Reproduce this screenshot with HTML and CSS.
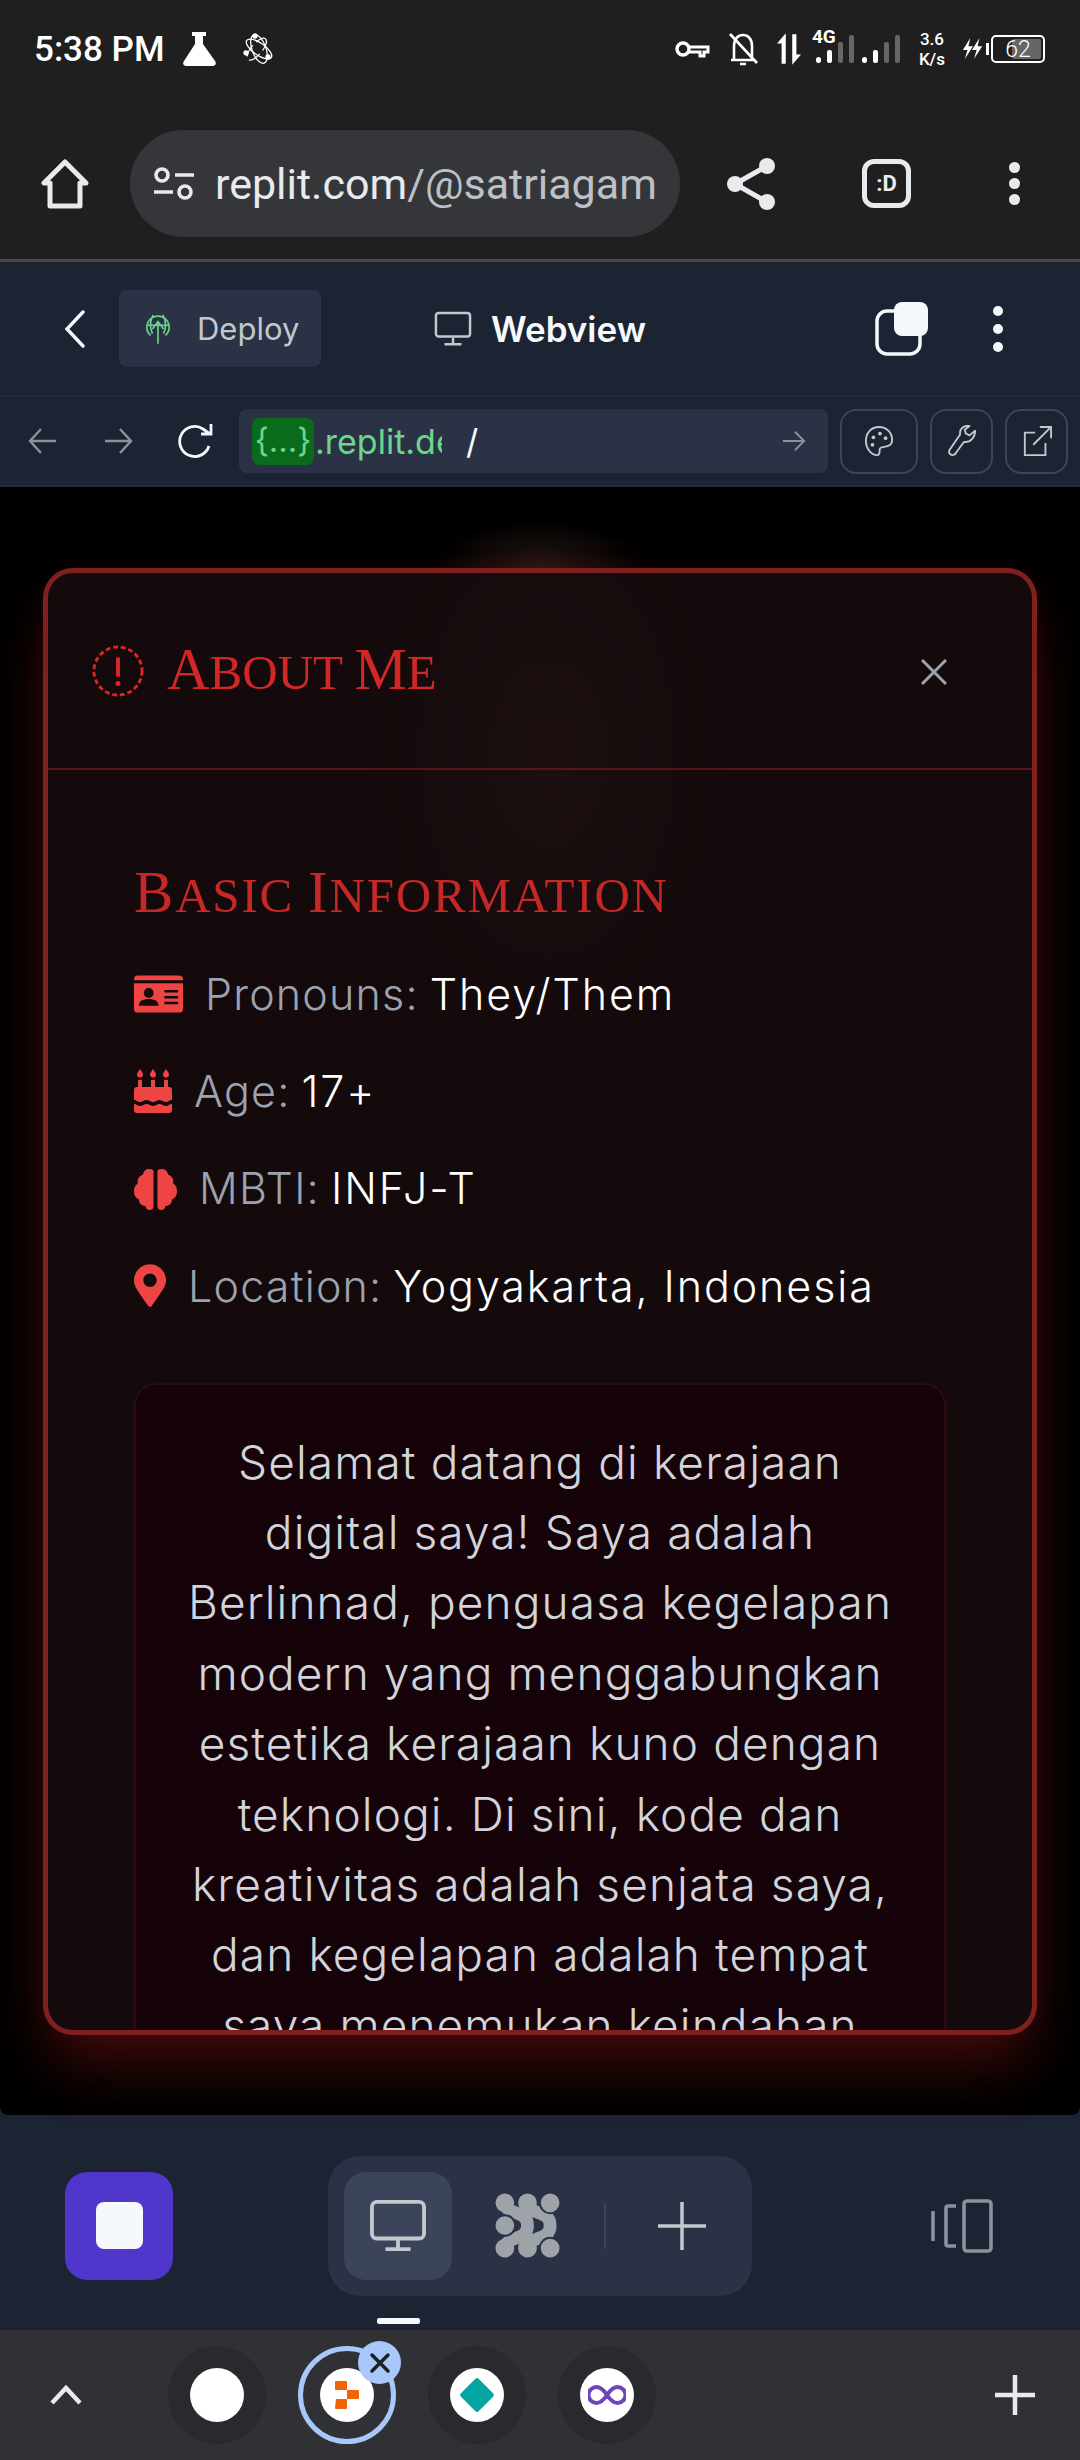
FILE: index.html
```html
<!DOCTYPE html>
<html>
  <head>
    <link rel="stylesheet" href="styles.css">
  </head>
  <body>
    <div class="browser">
      <div class="status">
        <div class="status-left">
          <span class="time">5:38 PM</span>
          <svg class="flask" viewBox="0 0 36 36"><path d="M11 1h14v4h-3v8l12 17c2 3 0 5-3 5H6c-3 0-5-2-3-5l11-17V5h-3z" fill="#fff"/></svg>
          <svg class="atom" viewBox="0 0 32 32" fill="none" stroke="#fff" stroke-width="1.3"><ellipse cx="16" cy="16" rx="7" ry="15" transform="rotate(-20 16 16)"/><ellipse cx="16" cy="16" rx="15" ry="6" transform="rotate(35 16 16)"/><ellipse cx="16" cy="16" rx="15" ry="6" transform="rotate(-50 16 16) scale(.9)" stroke-dasharray="14 5"/><circle cx="12" cy="3" r="2" fill="#fff"/><circle cx="25" cy="24" r="2" fill="#fff"/><circle cx="3" cy="20" r="2" fill="#fff"/></svg>
        </div>
        <div class="status-right">
          <svg class="key" viewBox="0 0 36 20" fill="none" stroke="#fff" stroke-width="3.4"><circle cx="9" cy="10" r="6"/><path d="M15 8h19v5h-4v4h-4v-4h-11" stroke-width="3"/></svg>
          <svg class="bell" viewBox="0 0 32 36" fill="none" stroke="#fff" stroke-width="2.6"><path d="M4 29h24M7 29V15C7 8 11 4 16 4s9 4 9 11v14M13 33h6M3 3l27 29"/></svg>
          <svg class="arrows" viewBox="0 0 26 34" fill="#fff"><path d="M5 0v33h4.500V0L0 11h5zM16.500 34V1H21v22h5l-9.500 11z"/></svg>
          <div class="signal">
            <span class="net">4G</span>
            <svg viewBox="0 0 84 28"><g fill="#fff"><rect x="0" y="22" width="5" height="6" rx="2.5"/><rect x="11" y="15" width="5" height="13" rx="2"/><rect x="46" y="22" width="5" height="6" rx="2.5"/><rect x="57" y="15" width="5" height="13" rx="2"/></g><g fill="#666"><rect x="22" y="7" width="5" height="21" rx="2"/><rect x="33" y="0" width="5" height="28" rx="2"/><rect x="68" y="7" width="5" height="21" rx="2"/><rect x="79" y="0" width="5" height="28" rx="2"/></g></svg>
          </div>
          <div class="speed"><span>3.6</span><span>K/s</span></div>
          <svg class="bolt" viewBox="0 0 24 26" fill="#fff"><path d="M9 1 1 14h5l-3 10 9-14H7zM19 1l-8 13h5l-3 10 9-14h-5z"/></svg>
          <div class="battery-cap"></div>
          <div class="battery"><div class="battery-fill"></div><span>62</span></div>
        </div>
      </div>
      <div class="toolbar">
        <svg class="home" viewBox="0 0 48 50" fill="none" stroke="#e8eaed" stroke-width="5" stroke-linejoin="round"><path d="M24 3 3 24h6v23h30V24h6z"/></svg>
        <div class="omnibox">
          <svg class="tune" viewBox="0 0 42 34" fill="none" stroke="#e8eaed" stroke-width="3.6"><circle cx="9" cy="8" r="6"/><path d="M22 8h19M1 25h19"/><circle cx="32" cy="25" r="6"/></svg>
          <span class="url">replit.com<span class="url-dim">/@satriagam</span></span>
        </div>
        <svg class="share" viewBox="0 0 50 54" fill="#e8eaed"><circle cx="41" cy="9" r="8"/><circle cx="9" cy="27" r="8"/><circle cx="41" cy="45" r="8"/><path d="M41 9 9 27l32 18" fill="none" stroke="#e8eaed" stroke-width="5"/></svg>
        <div class="tab-count">:D</div>
        <div class="dots"><i></i><i></i><i></i></div>
      </div>
    </div>

    <header class="repl-head">
      <svg class="back" viewBox="0 0 22 38" fill="none" stroke="#f5f9fc" stroke-width="3.4" stroke-linecap="round"><path d="M19 2 3 19l16 17"/></svg>
      <div class="deploy">
        <svg viewBox="0 0 28 34" fill="none" stroke="#6bd68a" stroke-width="1.8"><path d="M6 24A12 12 0 1 1 22 24M2 13h24M14 33V9M8 17l6-8 6 8M9 2c-4 6-4 14-1 20M19 2c4 6 4 14 1 20"/></svg>
        <span>Deploy</span>
      </div>
      <div class="head-tab">
        <svg viewBox="0 0 40 38" fill="none" stroke="#c2c8cc" stroke-width="2.6"><rect x="2" y="2" width="36" height="25" rx="3"/><path d="M20 28v6M11 35h18"/></svg>
        <span>Webview</span>
      </div>
      <svg class="panes" viewBox="0 0 54 54"><rect x="2" y="9" width="43" height="43" rx="10" fill="none" stroke="#f5f9fc" stroke-width="3.5"/><rect x="19" y="0" width="34" height="34" rx="8" fill="#f5f9fc"/></svg>
      <div class="dots head-dots"><i></i><i></i><i></i></div>
    </header>

    <div class="repl-url">
      <svg class="nav-arrow" viewBox="0 0 30 30" fill="none" stroke="#8b929b" stroke-width="2.4"><path d="M28 15H2M13 3 2 15l11 12"/></svg>
      <svg class="nav-arrow" viewBox="0 0 30 30" fill="none" stroke="#8b929b" stroke-width="2.4"><path d="M2 15h26M17 3l11 12-11 12"/></svg>
      <svg class="reload" viewBox="0 0 40 38" fill="none" stroke="#f5f9fc" stroke-width="2.8"><path d="M33 24A15 15 0 1 1 27 7l7 5M35 2v10H25"/></svg>
      <div class="url-input">
        <span class="chip">{...}</span>
        <span class="domain">.replit.de</span>
        <span class="slash">/</span>
        <svg class="go" viewBox="0 0 26 26" fill="none" stroke="#8b929b" stroke-width="2"><path d="M1 13h23M14 3l10 10-10 10"/></svg>
      </div>
      <div class="url-btn palette">
        <svg viewBox="0 0 32 34" fill="none" stroke="#c2c8cc" stroke-width="2"><path d="M16 2C8 2 2 8 2 17c0 7 5 15 12 15 4 0 2-5 3-7 2-3 13 0 13-9C30 8 24 2 16 2z"/><g fill="#c2c8cc" stroke="none"><circle cx="10" cy="13" r="2"/><circle cx="17" cy="9" r="2"/><circle cx="23" cy="14" r="2"/><circle cx="9" cy="21" r="2"/></g></svg>
      </div>
      <div class="url-btn">
        <svg viewBox="0 0 32 34" fill="none" stroke="#c2c8cc" stroke-width="2" stroke-linejoin="round"><path d="M30 6l-6 5-4-2-1-4 5-4c-6-1-11 3-10 9L3 26c-2 3 0 6 3 6 2 0 3-1 4-3l8-11c7 1 12-5 12-12z"/></svg>
      </div>
      <div class="url-btn">
        <svg viewBox="0 0 32 34" fill="none" stroke="#c2c8cc" stroke-width="2"><path d="M14 8H3v24h22V19M12 21 30 3M19 2h12v12"/></svg>
      </div>
    </div>

    <main class="webview">
      <section class="modal">
        <div class="modal-head">
          <div class="modal-title">
            <svg viewBox="0 0 54 54" fill="none" stroke="#dc2626"><circle cx="27" cy="27" r="25" stroke-width="3" stroke-dasharray="5 3"/><path d="M27 13v20" stroke-width="4"/><circle cx="27" cy="40" r="2.6" fill="#dc2626" stroke="none"/></svg>
            <h2><span class="cap">A</span>bout <span class="cap">M</span>e</h2>
          </div>
          <svg class="close" viewBox="0 0 26 26" stroke="#9ca3af" stroke-width="3"><path d="M1 1l24 24M25 1 1 25"/></svg>
        </div>
        <div class="modal-body">
          <h3><span class="cap">B</span>asic <span class="cap">I</span>nformation</h3>
          <ul class="facts">
            <li>
              <svg class="ic-card" viewBox="0 0 50 38"><path d="M4 0h42a4 4 0 0 1 4 4v1H0V4a4 4 0 0 1 4-4zM0 8h50v26a4 4 0 0 1-4 4H4a4 4 0 0 1-4-4z" fill="#ef4444"/><g fill="#150a0c"><circle cx="15" cy="18" r="5"/><path d="M5 31c0-5 4-7 10-7s10 2 10 7zM31 15h14v2.500H31zM31 21h14v2.500H31zM31 27h14v2.500H31z"/></g></svg>
              <p><span class="label">Pronouns:</span> <span class="val">They/Them</span></p>
            </li>
            <li>
              <svg class="ic-cake" viewBox="0 0 38 44" fill="#ef4444"><path d="M6 0c2 3 3 4 3 5.500a3 3 0 0 1-6 0C3 4 4 3 6 0zM19 0c2 3 3 4 3 5.500a3 3 0 0 1-6 0c0-1.500 1-2.500 3-5.500zM32 0c2 3 3 4 3 5.500a3 3 0 0 1-6 0C29 4 30 3 32 0z"/><path d="M4 11h4v7H4zM17 11h4v7h-4zM30 11h4v7h-4z"/><path d="M3 18h32a3 3 0 0 1 3 3v10c-3 0-3 2-6 2s-4-2-6.500-2-4 2-6.500 2-4-2-6.500-2S9 33 6 33s-3-2-6-2V21a3 3 0 0 1 3-3zM0 35c3 0 3 2 6 2s4-2 6.500-2 4 2 6.500 2 4-2 6.500-2 4 2 6.500 2 3-2 6-2v6a3 3 0 0 1-3 3H3a3 3 0 0 1-3-3z"/></svg>
              <p><span class="label">Age:</span> <span class="val">17+</span></p>
            </li>
            <li>
              <svg class="ic-brain" viewBox="0 0 44 44" fill="#ef4444"><path d="M20 4v36a4 4 0 0 1-8 0c-4 0-7-3-7-7-3-1-5-4-5-8s1-6 4-8c-1-4 1-8 5-9 1-4 3-6 6-6s5 1 5 2zM24 4v36a4 4 0 0 0 8 0c4 0 7-3 7-7 3-1 5-4 5-8s-1-6-4-8c1-4-1-8-5-9-1-4-3-6-6-6s-5 1-5 2z"/></svg>
              <p><span class="label">MBTI:</span> <span class="val">INFJ-T</span></p>
            </li>
            <li>
              <svg class="ic-pin" viewBox="0 0 384 512" fill="#ef4444"><path d="M172.268 501.67C26.97 291.031 0 262.413 0 192 0 85.961 85.961 0 192 0s192 85.961 192 192c0 70.413-26.97 99.031-172.268 309.67-9.535 13.774-29.93 13.773-39.464 0zM192 272c44.183 0 80-35.817 80-80s-35.817-80-80-80-80 35.817-80 80 35.817 80 80 80z"/></svg>
              <p><span class="label">Location:</span> <span class="val">Yogyakarta, Indonesia</span></p>
            </li>
          </ul>
          <div class="intro">
            <p>Selamat datang di kerajaan digital saya! Saya adalah Berlinnad, penguasa kegelapan modern yang menggabungkan estetika kerajaan kuno dengan teknologi. Di sini, kode dan kreativitas adalah senjata saya, dan kegelapan adalah tempat saya menemukan keindahan</p>
          </div>
        </div>
      </section>
    </main>

    <footer class="repl-foot">
      <div class="stop"><i></i></div>
      <div class="tool-group">
        <div class="tool active">
          <svg viewBox="0 0 60 56" fill="none" stroke="#c2c8cc" stroke-width="4"><rect x="3" y="3" width="54" height="38" rx="5"/><path d="M30 42v9M17 52h26"/></svg>
        </div>
        <div class="tool">
          <svg viewBox="0 0 66 66" fill="#9da3a8">
            <path d="M10 10C12 24 33 16 33 33S12 42 10 56M33 10C35 24 56 16 56 33S35 42 33 56" fill="none" stroke="#9da3a8" stroke-width="13"/>
            <circle cx="10" cy="10" r="9.500"/><circle cx="33" cy="10" r="9.500"/><circle cx="10" cy="56" r="9.500"/><circle cx="33" cy="56" r="9.500"/>
            <g stroke="#2b3245" stroke-width="2"><circle cx="56" cy="10" r="10.500"/><circle cx="10" cy="33" r="10.500"/><circle cx="56" cy="56" r="10.500"/></g>
          </svg>
        </div>
        <div class="tool-sep"></div>
        <svg class="tool-plus" viewBox="0 0 48 48" stroke="#c2c8cc" stroke-width="3.500"><path d="M24 0v48M0 24h48"/></svg>
      </div>
      <svg class="device" viewBox="0 0 62 54" fill="none" stroke="#8b929b" stroke-width="3.600"><rect x="33" y="2" width="27" height="50" rx="3"/><path d="M25 7h-8a2 2 0 0 0-2 2v36a2 2 0 0 0 2 2h8M2 12v30"/></svg>
      <div class="pager"></div>
    </footer>

    <nav class="tabstrip">
      <svg class="up" viewBox="0 0 32 20" fill="none" stroke="#e8eaed" stroke-width="4.500"><path d="M2 18 16 3l14 15"/></svg>
      <div class="tabs">
        <div class="tab"><div class="fav"></div></div>
        <div class="tab current">
          <div class="fav">
            <svg viewBox="0 0 24 28" fill="#f26207"><path d="M0 1a1 1 0 0 1 1-1h10a1 1 0 0 1 1 1v8H1a1 1 0 0 1-1-1zM12 9h11a1 1 0 0 1 1 1v7a1 1 0 0 1-1 1H12zM1 18h11v9a1 1 0 0 1-1 1H1a1 1 0 0 1-1-1z"/></svg>
          </div>
          <div class="tab-x"><svg viewBox="0 0 22 22" stroke="#1f1f1f" stroke-width="3.500" stroke-linecap="round"><path d="M3 3l16 16M19 3 3 19"/></svg></div>
        </div>
        <div class="tab"><div class="fav"><svg viewBox="0 0 36 36"><rect x="6" y="6" width="24" height="24" rx="2.500" fill="#04a5a0" transform="rotate(45 18 18)"/></svg></div></div>
        <div class="tab"><div class="fav"><svg viewBox="0 0 38 20" fill="none" stroke="#6d45bd" stroke-width="4"><path d="M19 10C15 4 12 2 8.500 2a8 8 0 0 0 0 16C12 18 15 16 19 10s7-8 10.500-8a8 8 0 0 1 0 16C26 18 23 16 19 10z"/></svg></div></div>
      </div>
      <svg class="strip-plus" viewBox="0 0 40 40" stroke="#e8eaed" stroke-width="4.500"><path d="M20 0v40M0 20h40"/></svg>
    </nav>
  </body>
</html>
```

FILE: styles.css
```css
* {
  margin: 0;
  padding: 0;
  box-sizing: border-box;
}
html {
  height: 100%;
}
body {
  width: 1080px;
  height: 2460px;
  display: flex;
  flex-direction: column;
  overflow: hidden;
  background-color: #1c2333;
  font-family: Inter, "Liberation Sans", sans-serif;
  color: #f5f9fc;
}
svg {
  display: block;
  flex: none;
}

/* chrome */
.browser {
  height: 262px;
  background-color: #1f1f1f;
  border-bottom: 3px solid #47494c;
}
.status {
  height: 98px;
  padding: 0 35px 0 34px;
  display: flex;
  justify-content: space-between;
  align-items: center;
}
.status-left {
  display: flex;
  align-items: center;
}
.time {
  font-family: Roboto, sans-serif;
  font-size: 35px;
  font-weight: 500;
  color: #fff;
}
.flask {
  width: 36px;
  height: 36px;
  margin-left: 16px;
}
.atom {
  width: 32px;
  height: 34px;
  margin-left: 26px;
}
.status-right {
  display: flex;
  align-items: center;
}
.key {
  width: 36px;
  height: 20px;
}
.bell {
  width: 32px;
  height: 36px;
  margin-left: 17px;
}
.arrows {
  width: 24px;
  height: 34px;
  margin-left: 18px;
}
.signal {
  width: 88px;
  margin-left: 11px;
  position: relative;
  height: 44px;
}
.signal svg {
  position: absolute;
  left: 4px;
  bottom: 8px;
  width: 84px;
  height: 28px;
}
.net {
  position: absolute;
  left: 0;
  top: -2px;
  font-size: 19px;
  font-weight: 700;
  color: #fff;
  font-family: Roboto, sans-serif;
}
.speed {
  display: flex;
  flex-direction: column;
  align-items: center;
  margin-left: 19px;
  font-family: Roboto, sans-serif;
  font-size: 17px;
  font-weight: 500;
  line-height: 20px;
  color: #fff;
}
.bolt {
  width: 22px;
  height: 26px;
  margin-left: 17px;
}
.battery-cap {
  width: 3px;
  height: 12px;
  margin-left: 2px;
  background-color: #fff;
}
.battery {
  position: relative;
  width: 54px;
  height: 28px;
  margin-left: 2px;
  border: 2px solid #fff;
  border-radius: 5px;
  display: flex;
  align-items: center;
  justify-content: center;
  font-family: Roboto, sans-serif;
  font-size: 23px;
  font-weight: 300;
  color: #fff;
}
.battery span {
  position: relative;
}
.battery-fill {
  position: absolute;
  left: 19px;
  top: 2px;
  bottom: 2px;
  right: 2px;
  background-color: #666;
  border-radius: 2px;
}
.toolbar {
  display: flex;
  align-items: center;
  height: 107px;
  margin-top: 32px;
}
.home {
  width: 48px;
  height: 50px;
  margin-left: 41px;
}
.omnibox {
  width: 550px;
  height: 107px;
  margin-left: 41px;
  border-radius: 54px;
  background-color: #35363a;
  display: flex;
  align-items: center;
  padding-left: 23px;
  overflow: hidden;
}
.tune {
  width: 42px;
  height: 34px;
}
.url {
  margin-left: 20px;
  font-family: Roboto, sans-serif;
  font-size: 43px;
  color: #e8eaed;
  white-space: nowrap;
}
.url-dim {
  color: #bdc1c6;
}
.share {
  width: 50px;
  height: 54px;
  margin-left: 46px;
}
.tab-count {
  width: 49px;
  height: 49px;
  margin-left: 86px;
  border: 5px solid #e8eaed;
  border-radius: 12px;
  display: flex;
  align-items: center;
  justify-content: center;
  font-family: Roboto, sans-serif;
  font-size: 22px;
  font-weight: 700;
  color: #e8eaed;
}
.dots {
  width: 12px;
  display: flex;
  flex-direction: column;
  gap: 5px;
}
.toolbar .dots {
  margin-left: 98px;
}
.dots i {
  display: block;
  width: 11px;
  height: 11px;
  border-radius: 50%;
  background-color: #e8eaed;
}

/* replit header */
.repl-head {
  height: 135px;
  display: flex;
  align-items: center;
  border-bottom: 2px solid #232b3c;
}
.back {
  width: 22px;
  height: 38px;
  margin-left: 64px;
}
.deploy {
  width: 202px;
  height: 77px;
  margin-left: 33px;
  background-color: #2b3245;
  border-radius: 8px;
  display: flex;
  align-items: center;
  padding-left: 26px;
  gap: 26px;
  font-size: 31px;
  color: #c2c8cc;
}
.deploy svg {
  width: 26px;
  height: 34px;
}
.head-tab {
  display: flex;
  align-items: center;
  margin-left: 112px;
  gap: 18px;
  font-size: 35px;
  font-weight: 600;
  color: #f5f9fc;
}
.head-tab svg {
  width: 40px;
  height: 36px;
}
.panes {
  width: 54px;
  height: 54px;
  margin-left: 229px;
}
.head-dots {
  margin-left: 64px;
  gap: 8px;
}
.head-dots i {
  width: 10px;
  height: 10px;
  background-color: #f5f9fc;
}

.repl-url {
  height: 90px;
  display: flex;
  align-items: center;
  padding-left: 28px;
  border-bottom: 2px solid #232b3c;
}
.nav-arrow {
  width: 30px;
  height: 30px;
  margin-right: 45px;
}
.reload {
  width: 40px;
  height: 38px;
  margin-left: -2px;
}
.url-input {
  width: 589px;
  height: 64px;
  margin-left: 23px;
  background-color: #2b3245;
  border-radius: 8px;
  display: flex;
  align-items: center;
  padding-left: 13px;
  font-size: 34px;
  position: relative;
}
.chip {
  width: 62px;
  height: 47px;
  border-radius: 8px;
  background-color: #0a6b1c;
  color: #6bd68a;
  text-align: center;
  line-height: 45px;
  font-size: 33px;
  flex: none;
}
.domain {
  width: 127px;
  flex: none;
  overflow: hidden;
  white-space: nowrap;
  margin-left: 1px;
  color: #6bd68a;
}
.slash {
  margin-left: 24px;
  color: #f5f9fc;
}
.go {
  position: absolute;
  right: 22px;
  top: 19px;
  width: 24px;
  height: 26px;
}
.url-btn {
  width: 63px;
  height: 65px;
  margin-left: 12px;
  border: 2px solid #3c445c;
  border-radius: 16px;
  display: flex;
  align-items: center;
  justify-content: center;
}
.palette {
  width: 78px;
}
.url-btn svg {
  width: 30px;
  height: 32px;
}

/* webview with the modal */
.webview {
  height: 1628px;
  padding: 81px 43px;
  border-radius: 0 0 8px 8px;
  background:
    radial-gradient(ellipse 110px 50px at 540px 84px, rgba(210, 130, 110, .2), transparent),
    #000;
}
.modal {
  height: 1467px;
  border: 5px solid #7f1f1f;
  border-radius: 30px;
  background:
    radial-gradient(ellipse 190px 300px at 500px 180px, rgba(120, 80, 70, .07), transparent),
    #140a0b;
  box-shadow: 0 35px 60px -8px rgba(185, 28, 28, .36), 0 0 24px rgba(185, 28, 28, .08);
  overflow: hidden;
}
.modal-head {
  height: 197px;
  display: flex;
  justify-content: space-between;
  align-items: center;
  padding: 0 85px 0 44px;
  border-bottom: 2px solid #561616;
}
.modal-title {
  display: flex;
  align-items: center;
  gap: 23px;
}
.modal-title svg {
  width: 52px;
  height: 54px;
}
.modal-title h2,
.modal-body h3 {
  font-family: "Liberation Serif", serif;
  font-size: 49px;
  font-weight: 400;
  line-height: 64px;
  text-transform: uppercase;
  color: #d32626;
}
.modal-body h3 {
  letter-spacing: 1.8px;
  color: #c62828;
}
.cap {
  font-size: 59px;
}
.close {
  width: 26px;
  height: 26px;
  margin-top: 2px;
}
.modal-body {
  padding: 90px 86px 0 86px;
}
.facts {
  list-style: none;
  margin-top: 17px;
}
.facts li {
  height: 97.4px;
  display: flex;
  align-items: center;
  gap: 22px;
  font-size: 43px;
  font-weight: 300;
  letter-spacing: 1.9px;
}
.label {
  color: #9ca3af;
  letter-spacing: 1.2px;
  margin-right: -3px;
}
.val {
  color: #fff;
}
.ic-card {
  width: 49px;
  height: 38px;
}
.ic-cake {
  width: 38px;
  height: 44px;
}
.ic-brain {
  width: 43px;
  height: 43px;
}
.ic-pin {
  width: 32px;
  height: 43px;
}
.intro {
  margin-top: 48px;
  height: 800px;
  padding: 42px 50px;
  border: 2px solid #2e0a10;
  border-radius: 22px;
  background-color: #16030a;
}
.intro p {
  font-size: 46px;
  font-weight: 300;
  letter-spacing: 1.1px;
  line-height: 70.4px;
  text-align: center;
  color: #d1d5db;
}

/* bottom of the repl */
.repl-foot {
  height: 215px;
  position: relative;
  display: flex;
  align-items: center;
  padding-top: 6px;
}
.stop {
  width: 108px;
  height: 108px;
  margin-left: 65px;
  border-radius: 22px;
  background-color: #5136cc;
  display: flex;
  align-items: center;
  justify-content: center;
}
.stop i {
  width: 47px;
  height: 47px;
  border-radius: 8px;
  background-color: #f5f9fc;
}
.tool-group {
  width: 424px;
  height: 140px;
  margin-left: 155px;
  border-radius: 32px;
  background-color: #2b3245;
  display: flex;
  align-items: center;
  padding-left: 16px;
}
.tool {
  width: 108px;
  height: 108px;
  border-radius: 22px;
  display: flex;
  align-items: center;
  justify-content: center;
}
.tool.active {
  background-color: #3c445c;
}
.tool svg {
  width: 60px;
  height: 54px;
}
.tool + .tool {
  width: 130px;
  margin-left: 10px;
}
.tool + .tool svg {
  width: 65px;
  height: 65px;
}
.tool-sep {
  width: 2px;
  height: 46px;
  margin-left: 12px;
  background-color: #3c445c;
}
.tool-plus {
  width: 48px;
  height: 48px;
  margin-left: 52px;
}
.device {
  width: 62px;
  height: 54px;
  margin-left: 179px;
}
.pager {
  position: absolute;
  left: 377px;
  bottom: 6px;
  width: 43px;
  height: 6px;
  border-radius: 2px;
  background-color: #f5f9fc;
}

/* tabs */
.tabstrip {
  height: 130px;
  background-color: #303134;
  display: flex;
  align-items: center;
  position: relative;
}
.up {
  width: 32px;
  height: 20px;
  margin-left: 50px;
}
.tabs {
  display: flex;
  gap: 32px;
  margin-left: 86px;
}
.tab {
  width: 98px;
  height: 98px;
  border-radius: 50%;
  background-color: #292a2d;
  display: flex;
  align-items: center;
  justify-content: center;
  position: relative;
}
.tab.current {
  background-color: transparent;
  border: 5px solid #a8c7fa;
}
.fav {
  width: 54px;
  height: 54px;
  border-radius: 50%;
  background-color: #fff;
  display: flex;
  align-items: center;
  justify-content: center;
}
.fav svg {
  width: 38px;
  height: 38px;
}
.current .fav svg {
  width: 24px;
  height: 28px;
}
.tab-x {
  position: absolute;
  right: -10px;
  top: -10px;
  width: 43px;
  height: 43px;
  border-radius: 50%;
  background-color: #a8c7fa;
  display: flex;
  align-items: center;
  justify-content: center;
}
.tab-x svg {
  width: 22px;
  height: 22px;
}
.strip-plus {
  width: 40px;
  height: 40px;
  margin-left: auto;
  margin-right: 45px;
}
```
